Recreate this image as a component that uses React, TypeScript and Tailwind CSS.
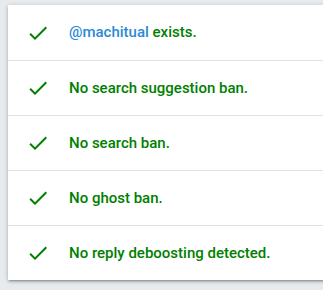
import { Check } from 'lucide-react';

const rows = [
  { user: '@machitual', text: 'exists.' },
  { text: 'No search suggestion ban.' },
  { text: 'No search ban.' },
  { text: 'No ghost ban.' },
  { text: 'No reply deboosting detected.' },
];

const CheckIcon = () => (
  <svg width="24" height="24" viewBox="0 0 24 24" className="shrink-0 fill-[#008000]">
    <path d="M9 16.17L4.83 12l-1.42 1.41L9 19 21 7l-1.41-1.41z" />
  </svg>
);

export default function App() {
  return (
    <div className="w-[323px] h-[290px] bg-[#e7ebee] pt-[5px] pl-[8px] overflow-hidden font-['Roboto',sans-serif]">
      <div className="w-[330px] bg-white shadow-[0_2px_2px_rgba(0,0,0,0.14),0_3px_1px_-2px_rgba(0,0,0,0.12),0_1px_5px_rgba(0,0,0,0.2)]">
        {rows.map((r, i) => (
          <div
            key={i}
            className={`h-[55px] flex items-center pl-[18px] ${i > 0 ? 'border-t border-[#e0e0e0]' : ''}`}
          >
            <CheckIcon />
            <span className="ml-[19px] text-[15px] font-medium text-[#008000]">
              {r.user && <span className="text-[#2b8ad3]">{r.user} </span>}
              {r.text}
            </span>
          </div>
        ))}
      </div>
    </div>
  );
}
